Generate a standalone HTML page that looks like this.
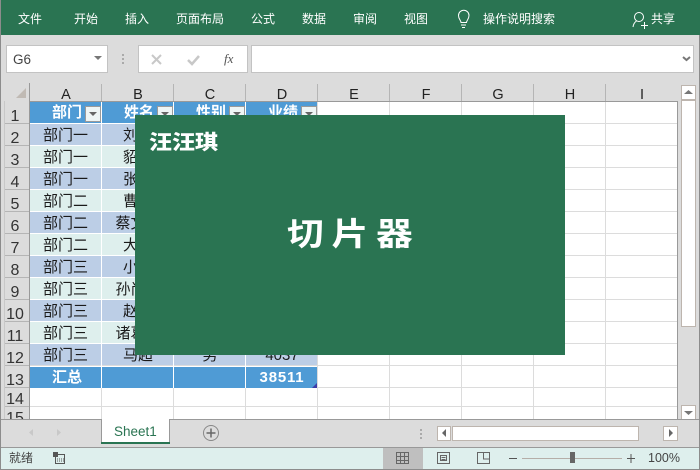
<!DOCTYPE html>
<html><head><meta charset="utf-8"><style>
html,body{margin:0;padding:0;background:#fff;width:700px;height:470px;overflow:hidden}
svg{display:block}
text{font-family:"Liberation Sans","Noto Sans CJK SC",sans-serif}
.c{font-size:15px;fill:#1a1a1a;text-anchor:middle}
.n{font-size:16px;fill:#333;text-anchor:middle}
.h{font-size:14.500px;fill:#222;text-anchor:middle}
.r{font-size:12px;fill:#fff;text-anchor:start}
.w{font-size:15px;fill:#fff;text-anchor:middle;font-weight:bold}
</style></head><body>
<svg width="700" height="470" viewBox="0 0 700 470" xmlns="http://www.w3.org/2000/svg">
<g shape-rendering="crispEdges">
<rect width="700" height="470" fill="#dcdcdc"/>
<rect width="700" height="35" fill="#2a7452"/>
<!-- formula bar -->
<rect x="6.500" y="45.500" width="101" height="27" fill="#fff" stroke="#c3c3c3"/>
<rect x="138.500" y="45.500" width="109" height="27" fill="#fff" stroke="#c3c3c3"/>
<rect x="251.500" y="45.500" width="442" height="27" fill="#fff" stroke="#c3c3c3"/>
<rect x="122" y="54" width="2" height="2" fill="#aaa"/><rect x="122" y="58" width="2" height="2" fill="#aaa"/><rect x="122" y="62" width="2" height="2" fill="#aaa"/>
<!-- grid bg -->
<rect x="30" y="102" width="648" height="317" fill="#fff"/>
<rect x="29" y="101" width="649" height="1" fill="#999"/>
<rect x="29" y="83" width="1" height="336" fill="#999"/>
<rect x="677" y="101" width="1" height="318" fill="#999"/>
<rect x="4" y="101" width="1" height="318" fill="#c8c8c8"/>
</g>
<g shape-rendering="crispEdges" id="grid">
<!-- vertical grid -->
<g fill="#dcdcdc">
<rect x="317" y="102" width="1" height="317"/><rect x="389" y="102" width="1" height="317"/><rect x="461" y="102" width="1" height="317"/><rect x="533" y="102" width="1" height="317"/><rect x="605" y="102" width="1" height="317"/>
<rect x="30" y="123" width="647" height="1"/><rect x="30" y="145" width="647" height="1"/><rect x="30" y="167" width="647" height="1"/><rect x="30" y="189" width="647" height="1"/><rect x="30" y="211" width="647" height="1"/><rect x="30" y="233" width="647" height="1"/><rect x="30" y="255" width="647" height="1"/><rect x="30" y="277" width="647" height="1"/><rect x="30" y="299" width="647" height="1"/><rect x="30" y="321" width="647" height="1"/><rect x="30" y="343" width="647" height="1"/><rect x="30" y="365" width="647" height="1"/><rect x="30" y="387" width="647" height="1"/><rect x="30" y="406" width="647" height="1"/>
<rect x="101" y="388" width="1" height="31"/><rect x="173" y="388" width="1" height="31"/><rect x="245" y="388" width="1" height="31"/>
</g>
<!-- table -->
<rect x="30" y="102" width="287" height="21" fill="#4f9bd5"/>
<rect x="30" y="124" width="287" height="21" fill="#bcceE6"/>
<rect x="30" y="146" width="287" height="21" fill="#deefed"/>
<rect x="30" y="168" width="287" height="21" fill="#bcceE6"/>
<rect x="30" y="190" width="287" height="21" fill="#deefed"/>
<rect x="30" y="212" width="287" height="21" fill="#bcceE6"/>
<rect x="30" y="234" width="287" height="21" fill="#deefed"/>
<rect x="30" y="256" width="287" height="21" fill="#bcceE6"/>
<rect x="30" y="278" width="287" height="21" fill="#deefed"/>
<rect x="30" y="300" width="287" height="21" fill="#bcceE6"/>
<rect x="30" y="322" width="287" height="21" fill="#deefed"/>
<rect x="30" y="344" width="287" height="21" fill="#bcceE6"/>
<rect x="30" y="367" width="287" height="21" fill="#4f9bd5"/>
<g fill="#fff">
<rect x="101" y="102" width="1" height="286"/><rect x="173" y="102" width="1" height="286"/><rect x="245" y="102" width="1" height="286"/>
<rect x="30" y="123" width="287" height="1"/><rect x="30" y="145" width="287" height="1"/><rect x="30" y="167" width="287" height="1"/><rect x="30" y="189" width="287" height="1"/><rect x="30" y="211" width="287" height="1"/><rect x="30" y="233" width="287" height="1"/><rect x="30" y="255" width="287" height="1"/><rect x="30" y="277" width="287" height="1"/><rect x="30" y="299" width="287" height="1"/><rect x="30" y="321" width="287" height="1"/><rect x="30" y="343" width="287" height="1"/>
</g>
<!-- header separators -->
<g fill="#b5b5b5">
<rect x="101" y="84" width="1" height="17"/><rect x="173" y="84" width="1" height="17"/><rect x="245" y="84" width="1" height="17"/><rect x="317" y="84" width="1" height="17"/><rect x="389" y="84" width="1" height="17"/><rect x="461" y="84" width="1" height="17"/><rect x="533" y="84" width="1" height="17"/><rect x="605" y="84" width="1" height="17"/>
<rect x="5" y="123" width="24" height="1"/><rect x="5" y="145" width="24" height="1"/><rect x="5" y="167" width="24" height="1"/><rect x="5" y="189" width="24" height="1"/><rect x="5" y="211" width="24" height="1"/><rect x="5" y="233" width="24" height="1"/><rect x="5" y="255" width="24" height="1"/><rect x="5" y="277" width="24" height="1"/><rect x="5" y="299" width="24" height="1"/><rect x="5" y="321" width="24" height="1"/><rect x="5" y="343" width="24" height="1"/><rect x="5" y="365" width="24" height="1"/><rect x="5" y="387" width="24" height="1"/><rect x="5" y="406" width="24" height="1"/>
</g>
<!-- filter buttons -->
<g fill="#eef5f5" stroke="#9a9a9a">
<rect x="85.500" y="106.500" width="15" height="15"/><rect x="157.500" y="106.500" width="15" height="15"/><rect x="229.500" y="106.500" width="15" height="15"/><rect x="301.500" y="106.500" width="15" height="15"/>
</g>
</g>
<g fill="#666"><path d="M89 112h8l-4 4z"/><path d="M161 112h8l-4 4z"/><path d="M233 112h8l-4 4z"/><path d="M305 112h8l-4 4z"/></g>
<path d="M26 88v10H16z" fill="#c0bab4"/>
<path d="M317 383v5h-5z" fill="#3c3ca8"/>
<!-- ribbon text -->
<text class="r" x="18" y="23">文件</text><text class="r" x="74" y="23">开始</text><text class="r" x="125" y="23">插入</text><text class="r" x="176" y="23">页面布局</text><text class="r" x="251" y="23">公式</text><text class="r" x="302" y="23">数据</text><text class="r" x="353" y="23">审阅</text><text class="r" x="404" y="23">视图</text><text class="r" x="483" y="23">操作说明搜索</text><text class="r" x="651" y="23">共享</text>
<!-- bulb -->
<g fill="none" stroke="#fff" stroke-width="1"><path d="M461 22.500c0-2-2.500-3.500-2.500-7a5 5 0 0 1 10.500 0c0 3.500-2.500 5-2.500 7z"/><path d="M461 25h5M462 27.500h3"/></g>
<!-- person -->
<g fill="none" stroke="#fff" stroke-width="1"><circle cx="639" cy="17" r="4.500"/><path d="M633 27c.5-3.500 2-5 3.500-6"/><path d="M641 25.500h7M644.500 22v7"/></g>
<!-- formula bar content -->
<text x="13" y="64" style="font-size:13.500px;fill:#444">G6</text>
<path d="M94 56h8l-4 4z" fill="#777"/>
<path d="M152 55l9 9M161 55l-9 9" stroke="#c8c8c8" stroke-width="2" fill="none"/>
<path d="M188 60l4 4 7-8" stroke="#c8c8c8" stroke-width="2.500" fill="none"/>
<text x="224" y="63" style="font-family:'Liberation Serif',serif;font-size:13px;font-style:italic;fill:#555">fx</text>
<path d="M683 57l3.500 3 3.500-3" stroke="#777" stroke-width="2" fill="none"/>
<!-- col heads -->
<text class="h" x="66" y="99">A</text><text class="h" x="138" y="99">B</text><text class="h" x="210" y="99">C</text><text class="h" x="282" y="99">D</text><text class="h" x="354" y="99">E</text><text class="h" x="426" y="99">F</text><text class="h" x="498" y="99">G</text><text class="h" x="570" y="99">H</text><text class="h" x="642" y="99">I</text>
<!-- rows -->
<text class="n" x="15" y="121">1</text><text class="n" x="15" y="143">2</text><text class="n" x="15" y="165">3</text><text class="n" x="15" y="187">4</text><text class="n" x="15" y="209">5</text><text class="n" x="15" y="231">6</text><text class="n" x="15" y="253">7</text><text class="n" x="15" y="275">8</text><text class="n" x="15" y="297">9</text><text class="n" x="15" y="319">10</text><text class="n" x="15" y="341">11</text><text class="n" x="15" y="363">12</text><text class="n" x="15" y="385">13</text><text class="n" x="15" y="404">14</text><text class="n" x="15" y="423" clip-path="url(#cl)">15</text>
<clipPath id="cl"><rect x="0" y="405" width="30" height="14"/></clipPath>
<text class="w" x="67" y="117">部门</text><text class="w" x="139" y="117">姓名</text><text class="w" x="211" y="117">性别</text><text class="w" x="283" y="117">业绩</text>
<text class="c" x="65.500" y="140">部门一</text><text class="c" x="65.500" y="162">部门一</text><text class="c" x="65.500" y="184">部门一</text><text class="c" x="65.500" y="206">部门二</text><text class="c" x="65.500" y="228">部门二</text><text class="c" x="65.500" y="250">部门二</text><text class="c" x="65.500" y="272">部门三</text><text class="c" x="65.500" y="294">部门三</text><text class="c" x="65.500" y="316">部门三</text><text class="c" x="65.500" y="338">部门三</text><text class="c" x="65.500" y="360">部门三</text>
<text class="c" x="138" y="140">刘备</text><text class="c" x="138" y="162">貂蝉</text><text class="c" x="138" y="184">张飞</text><text class="c" x="138" y="206">曹操</text><text class="c" x="138" y="228">蔡文姬</text><text class="c" x="138" y="250">大乔</text><text class="c" x="138" y="272">小乔</text><text class="c" x="138" y="294">孙尚香</text><text class="c" x="138" y="316">赵云</text><text class="c" x="138" y="338">诸葛亮</text><text class="c" x="138" y="360">马超</text>
<text class="c" x="210" y="360">男</text><text class="c" x="282" y="360">4037</text>
<text class="w" x="67" y="382">汇总</text><text class="w" x="282" y="382" style="letter-spacing:.8px">38511</text>
<!-- overlay -->
<rect x="135" y="115" width="430" height="240" fill="#2a7452" shape-rendering="crispEdges"/>
<text transform="translate(149,149) scale(1.15,1)" style="font-size:20px;font-weight:900;fill:#fff">汪汪琪</text>
<text transform="translate(287,245) scale(1.15,1)" style="font-size:32px;font-weight:700;fill:#fff;letter-spacing:6.700px">切片器</text>
<!-- vertical scrollbar -->
<g shape-rendering="crispEdges">
<rect x="681.500" y="85.500" width="14" height="14" fill="#fff" stroke="#bdb5ae"/>
<rect x="681.500" y="100.500" width="14" height="226" fill="#fff" stroke="#bdb5ae"/>
<rect x="681.500" y="405.500" width="14" height="14" fill="#fff" stroke="#bdb5ae"/>
<rect x="0" y="419" width="700" height="1" fill="#999"/>
<rect x="0" y="447" width="700" height="1" fill="#999"/>
<rect x="0" y="448" width="700" height="22" fill="#deefed"/>
<rect x="0" y="0" width="1" height="470" fill="#8c8c8c"/>
<rect x="699" y="35" width="1" height="435" fill="#8c8c8c"/>
<rect x="0" y="469" width="700" height="1" fill="#8c8c8c"/>
<rect x="102" y="419" width="67" height="23" fill="#fff"/>
<rect x="101" y="419" width="1" height="25" fill="#999"/>
<rect x="169" y="419" width="1" height="25" fill="#999"/>
<rect x="101" y="442" width="69" height="2" fill="#2a7452"/>
<rect x="437.500" y="426.500" width="13" height="14" fill="#fff" stroke="#bdb5ae"/>
<rect x="452.500" y="426.500" width="186" height="14" fill="#fff" stroke="#bdb5ae"/>
<rect x="663.500" y="426.500" width="14" height="14" fill="#fff" stroke="#bdb5ae"/>
<rect x="420" y="429" width="2" height="2" fill="#aaa"/><rect x="420" y="433" width="2" height="2" fill="#aaa"/><rect x="420" y="437" width="2" height="2" fill="#aaa"/>
<rect x="383" y="448" width="40" height="21" fill="#bfbfbf"/>
</g>
<path d="M684 92l4.500-4 4.500 4z" fill="#777" transform="translate(0,2)"/>
<path d="M684 411h9l-4.500 4z" fill="#777"/>
<path d="M446 429v8l-4-4z" fill="#666"/>
<path d="M669 429v8l4-4z" fill="#666"/>
<path d="M33 429v7l-4-3.500z" fill="#c8c8c8"/>
<path d="M57 429v7l4-3.500z" fill="#c8c8c8"/>
<text x="114" y="436" style="font-size:13.500px;fill:#2a7452">Sheet1</text>
<circle cx="211" cy="433" r="7.500" fill="none" stroke="#888" stroke-width="1"/>
<path d="M206.500 433h9M211 428.500v9" stroke="#666" stroke-width="1.500" fill="none"/>
<!-- status -->
<text x="9" y="462" style="font-size:12px;fill:#444">就绪</text>
<g shape-rendering="crispEdges">
<rect x="55.500" y="454.500" width="9" height="9" fill="none" stroke="#555"/>
<rect x="53" y="452" width="5" height="5" fill="#555"/>
<path d="M57 459h7M57 461h7" stroke="#555" fill="none" stroke-dasharray="1 1"/>
<g fill="none" stroke="#666">
<path d="M396.500 452.500h12v11h-12zM400.500 452.500v11M404.500 452.500v11M396.500 456.500h12M396.500 460.500h12"/>
<path d="M437.500 452.500h12v11h-12zM440.500 455.500h6v5h-6zM441.500 457.500h4M441.500 459.500h4"/>
<path d="M477.500 452.500h12v11h-12zM483.500 452.500v6.500h6"/>
</g>
<rect x="509" y="458" width="8" height="1" fill="#555"/>
<rect x="522" y="458" width="100" height="1" fill="#b5aea8"/>
<rect x="570" y="452" width="5" height="11" fill="#666"/>
<rect x="627" y="458" width="8" height="1" fill="#555"/><rect x="630.500" y="454" width="1" height="9" fill="#555"/>
</g>
<text x="648" y="462" style="font-size:12.500px;fill:#444">100%</text>
</svg>
</body></html>
